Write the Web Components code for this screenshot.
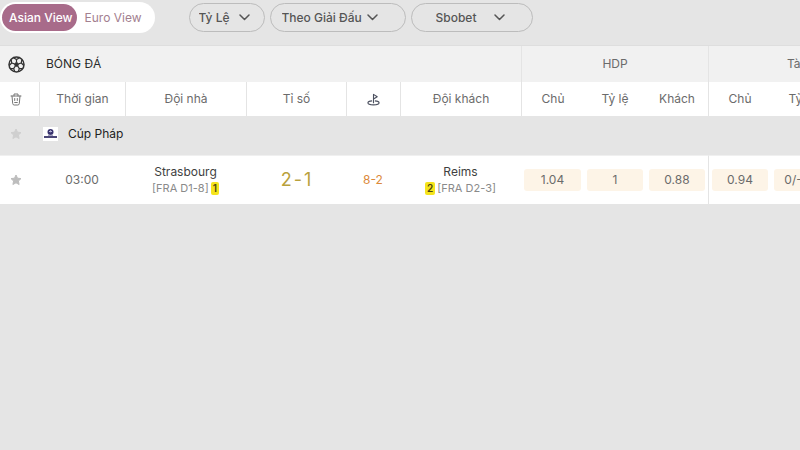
<!DOCTYPE html>
<html lang="vi">
<head>
<meta charset="utf-8">
<meta name="viewport" content="width=device-width, initial-scale=1">
<title>Bóng đá</title>
<style>
  body {
    margin: 0;
    background-color: #e5e5e5;
    color: #6b6b6b;
    font-family: Inter, "Noto Sans", sans-serif;
    font-size: 12px;
    line-height: 16px;
  }
</style>
</head>
<body>

<template id="view-switch">
  <style>
    :host {
      display: flex;
      padding: 2px;
      border-radius: 16px;
      background-color: #fff;
    }
    button {
      height: 27px;
      padding: 0 11px 0 8px;
      border: none;
      border-radius: 14px;
      background: none;
      color: #a3808f;
      font: inherit;
      &:first-of-type {
        padding: 0 4px 0 7px;
      }
      &[aria-pressed="true"] {
        background-color: #a86b8a;
        color: #fff;
        font-weight: 500;
      }
    }
  </style>
  <button aria-pressed="true">Asian View</button>
  <button aria-pressed="false">Euro View</button>
</template>

<template id="filter-select">
  <style>
    :host {
      display: grid;
      align-items: center;
      width: var(--filter-width, 120px);
    }
    select, svg {
      grid-area: 1 / 1;
    }
    select {
      appearance: none;
      box-sizing: border-box;
      width: 100%;
      height: 29px;
      padding: 0 0 0 var(--filter-start, 12px);
      border: 1px solid #bcbcbc;
      border-radius: 15px;
      background: none;
      color: #555;
      font: inherit;
      font-weight: 500;
    }
    svg {
      justify-self: end;
      margin-right: var(--filter-end, 28px);
      pointer-events: none;
    }
  </style>
  <select></select>
  <svg width="11" height="7" viewBox="0 0 11 7" fill="none" stroke="#555" stroke-width="1.5" stroke-linecap="round" stroke-linejoin="round">
    <path d="M1 1l4.500 4.500L10 1"/>
  </svg>
</template>

<template id="top-bar">
  <style>
    :host {
      display: flex;
      align-items: center;
      gap: 34px;
      padding: 2px 0 12px;
      border-bottom: 1px solid #dedede;
    }
    div {
      display: flex;
      gap: 5px;
    }
  </style>
  <slot name="view"></slot>
  <div><slot></slot></div>
</template>

<template id="favorite-star">
  <style>
    :host {
      display: flex;
      justify-content: center;
      color: #bdbdbd;
    }
    button {
      display: flex;
      padding: 0;
      border: none;
      background: none;
      color: inherit;
    }
  </style>
  <button aria-label="Yêu thích">
    <svg width="12" height="12" viewBox="0 0 12 12" fill="currentColor" stroke="currentColor" stroke-linejoin="round">
      <path d="M6 1l1.500 3.200 3.500.4-2.600 2.400.7 3.500L6 8.800l-3.100 1.700.7-3.500L1 4.600l3.500-.4z"/>
    </svg>
  </button>
</template>

<template id="team-name">
  <style>
    :host {
      display: block;
      color: #3f3f3f;
    }
    div {
      display: flex;
      justify-content: center;
      align-items: center;
      gap: 2px;
      color: #8a8a8a;
      font-size: 11px;
    }
    :host([away]) div {
      flex-direction: row-reverse;
    }
    ::slotted([slot="cards"]) {
      padding: 0 2px;
      border-radius: 2px;
      background-color: #f5e41c;
      color: #4a4412;
      font-size: 10px;
      font-weight: 600;
      line-height: 13px;
    }
  </style>
  <slot></slot>
  <div><slot name="rank"></slot><slot name="cards"></slot></div>
</template>

<template id="odds-price">
  <style>
    :host {
      display: block;
      padding: 0 3px;
    }
    button {
      display: block;
      width: 100%;
      height: 22px;
      padding: 0;
      border: none;
      border-radius: 3px;
      background-color: #fdf4e7;
      color: inherit;
      font: inherit;
    }
  </style>
  <button><slot></slot></button>
</template>

<template id="odds-board">
  <style>
    :host {
      display: block;
      overflow-x: auto;
      scrollbar-width: none;
    }
    table {
      width: 100%;
      min-width: 903px;
      table-layout: fixed;
      border-collapse: separate;
      border-spacing: 0;
    }
    th, td {
      box-sizing: border-box;
      padding: 0;
      text-align: center;
      font-weight: 400;
    }
    /* icon column leans to the left edge */
    tr > :first-child {
      padding-right: 7px;
    }
    svg {
      display: block;
      margin: 0 auto;
    }
    .sport th {
      height: 36px;
      background-color: #f1f1f1;
      &.name {
        padding-left: 7px;
        color: #2b2b2b;
        text-align: left;
      }
    }
    .heads th {
      height: 34px;
      background-color: #fff;
    }
    .line {
      border-left: 1px solid #e4e4e4;
    }
    .league {
      & th {
        height: 39px;
        padding-bottom: 4px;
      }
      & .name {
        color: #222;
        text-align: left;
      }
      & .cup {
        display: flex;
        align-items: center;
        gap: 10px;
        padding-left: 4px;
      }
      & svg {
        margin: 0;
      }
      & favorite-star {
        color: #cfcfcf;
      }
    }
    .match td {
      height: 49px;
      border-top: 1px solid #f0f0f0;
      background-color: #fff;
    }
    .match .score {
      color: #b9a13c;
      font-size: 18px;
      & span {
        margin: 0 2px;
      }
    }
    .corner {
      color: #dc8a3c;
    }
    button {
      display: block;
      margin: 0 auto;
      padding: 0;
      border: none;
      background: none;
      color: inherit;
    }
  </style>
  <table>
    <colgroup>
      <col style="width: 39px">
      <col style="width: 86px">
      <col style="width: 121px">
      <col style="width: 100px">
      <col style="width: 54px">
      <col style="width: 121px">
      <col style="width: 63px">
      <col style="width: 62px">
      <col style="width: 62px">
      <col style="width: 63px">
      <col style="width: 62px">
      <col style="width: 70px">
    </colgroup>
    <thead>
      <tr class="sport">
        <th>
          <svg width="17" height="17" viewBox="0 0 17 17" fill="none" stroke="#333">
            <circle cx="8.500" cy="8.500" r="7.500" stroke-width="1.500"/>
            <path fill="#333" d="M8.500 6.300l2 1.500-.8 2.400H7.300l-.8-2.400z"/>
            <path stroke-width="1.200" d="M8.500 3.500v3M6.500 7.800L3.700 7M10.500 7.800l2.800-.8M7.300 10.200l-1.700 2.400M9.700 10.200l1.700 2.400"/>
            <path stroke-width="1.200" d="M5.500 1.700l3 1.900 3-1.900M1.200 9.500L3.700 7l-.5-3.500M15.800 9.500L13.300 7l.5-3.500M2.500 12.700l3.100-.1 1.300 3.200M14.500 12.700l-3.100-.1-1.300 3.200"/>
          </svg>
        </th>
        <th class="name" colspan="5">BÓNG ĐÁ</th>
        <th class="line" colspan="3">HDP</th>
        <th class="line" colspan="3">Tài Xỉu</th>
      </tr>
      <tr class="heads">
        <th>
          <button aria-label="Xóa">
            <svg width="12" height="13" viewBox="0 0 12 13" fill="none" stroke="#777" stroke-linecap="round" stroke-linejoin="round">
              <path d="M1 3h10M4 3V1h4v2M2 3l.7 7.500q.1 1.500 1.500 1.500h3.600q1.400 0 1.500-1.500L10 3M4.700 5.500v2M7.300 5.500v2M4.700 9.500h2.600"/>
            </svg>
          </button>
        </th>
        <th class="line">Thời gian</th>
        <th class="line">Đội nhà</th>
        <th class="line">Tỉ số</th>
        <th class="line">
          <svg width="13" height="13" viewBox="0 0 14 14" fill="none" stroke="#4c5160" stroke-width="1.200" stroke-linejoin="round">
            <path d="M7 11V1.500l4 2.500-4 2.500"/>
            <path d="M5.500 8.500C2.800 8.700 1 9.500 1 10.600c0 1.300 2.500 2.200 6 2.200s6-.9 6-2.200c0-1.100-1.800-1.900-4.500-2.100"/>
          </svg>
        </th>
        <th class="line">Đội khách</th>
        <th class="line">Chủ</th>
        <th>Tỷ lệ</th>
        <th>Khách</th>
        <th class="line">Chủ</th>
        <th>Tỷ lệ</th>
        <th>Khách</th>
      </tr>
    </thead>
    <tbody>
      <tr class="league">
        <th><favorite-star></favorite-star></th>
        <th class="name" colspan="11">
          <div class="cup">
            <svg width="15" height="14" viewBox="0 0 15 14">
              <path fill="#fff" d="M0 0h15v14H0z"/>
              <circle cx="7.500" cy="5" r="3" fill="#39346f"/>
              <path d="M6 4.500h3M7.500 3.300v2" stroke="#b9b6d8"/>
              <path d="M1 10h13" stroke="#4b4777" stroke-width="2"/>
              <path d="M5 8.300h5" stroke="#8b88ad"/>
            </svg>
            <span>Cúp Pháp</span>
          </div>
        </th>
      </tr>
      <tr class="match">
        <td><favorite-star></favorite-star></td>
        <td>03:00</td>
        <td>
          <team-name>
            Strasbourg
            <span slot="rank">[FRA D1-8]</span>
            <span slot="cards">1</span>
          </team-name>
        </td>
        <td class="score">2<span>-</span>1</td>
        <td class="corner">8-2</td>
        <td>
          <team-name away>
            Reims
            <span slot="rank">[FRA D2-3]</span>
            <span slot="cards">2</span>
          </team-name>
        </td>
        <td><odds-price>1.04</odds-price></td>
        <td><odds-price>1</odds-price></td>
        <td><odds-price>0.88</odds-price></td>
        <td class="line"><odds-price>0.94</odds-price></td>
        <td><odds-price>0/-0.5</odds-price></td>
        <td><odds-price>0.92</odds-price></td>
      </tr>
    </tbody>
  </table>
</template>

<script>
  class TemplateElement extends HTMLElement {
    constructor () {
      super()
      let template = document.querySelector(`template#${this.localName}`)
      this.attachShadow({ mode: 'open' }).appendChild(document.importNode(template.content, true))
    }
  }

  customElements.define('view-switch', class ViewSwitch extends TemplateElement {
    connectedCallback () {
      let buttons = [...this.shadowRoot.querySelectorAll('button')]
      for (let button of buttons) {
        button.onclick = () => buttons.forEach(b => b.setAttribute('aria-pressed', b === button))
      }
    }
  })

  customElements.define('filter-select', class FilterSelect extends TemplateElement {
    connectedCallback () {
      let select = this.shadowRoot.querySelector('select')
      let options = this.getAttribute('options').split(',')
      select.setAttribute('aria-label', options[0])
      select.replaceChildren(...options.map(text => new Option(text)))
    }
  })

  customElements.define('top-bar', class TopBar extends TemplateElement {})
  customElements.define('favorite-star', class FavoriteStar extends TemplateElement {})
  customElements.define('team-name', class TeamName extends TemplateElement {})
  customElements.define('odds-price', class OddsPrice extends TemplateElement {})
  customElements.define('odds-board', class OddsBoard extends TemplateElement {})
</script>

<style>
  filter-select {
    &.odds {
      --filter-width: 76px;
      --filter-start: 9px;
      --filter-end: 15px;
    }
    &.sort {
      --filter-width: 136px;
      --filter-start: 11px;
    }
    &.book {
      --filter-width: 122px;
      --filter-start: 24px;
    }
  }
</style>

<top-bar>
  <view-switch slot="view"></view-switch>
  <filter-select class="odds" options="Tỷ Lệ"></filter-select>
  <filter-select class="sort" options="Theo Giải Đấu"></filter-select>
  <filter-select class="book" options="Sbobet"></filter-select>
</top-bar>
<odds-board></odds-board>

</body>
</html>
